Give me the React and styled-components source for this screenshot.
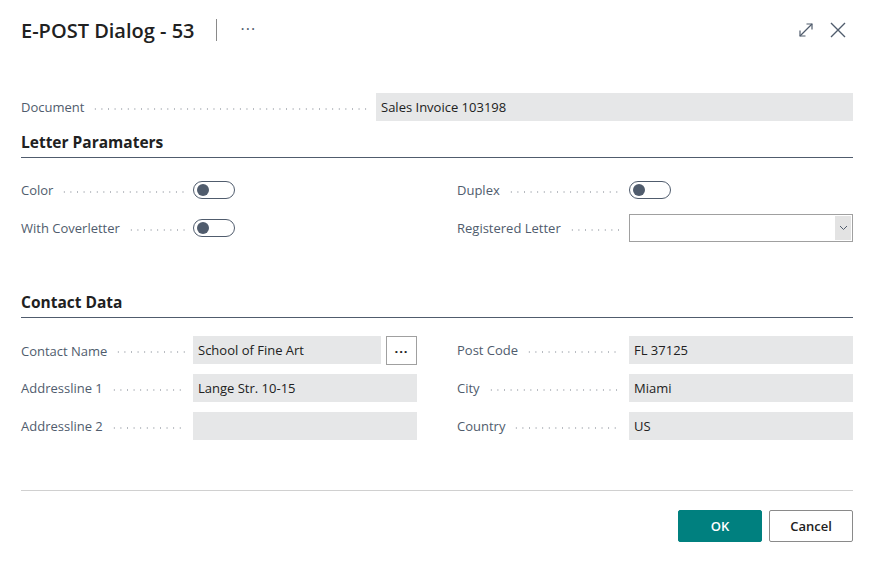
import React from 'react';
import styled, { createGlobalStyle } from 'styled-components';

const GlobalStyle = createGlobalStyle`
  html, body {
    margin: 0;
    padding: 0;
    background: #ffffff;
  }
  body {
    font-family: "Open Sans", "Noto Sans", sans-serif;
    color: #212121;
  }
`;

const Dialog = styled.div`
  width: 872px;
  height: 563px;
  box-sizing: border-box;
  padding: 0 19px 0 21px;
  display: flex;
  flex-direction: column;
`;

const Header = styled.header`
  height: 60px;
  display: flex;
  align-items: center;
`;

const Title = styled.h1`
  margin: 0;
  font-size: 20px;
  font-weight: 600;
  color: #212121;
`;

const Divider = styled.div`
  width: 1px;
  height: 22px;
  background: #8a8a8a;
  margin: 0 24px 0 21px;
`;

const MoreDots = styled.span`
  font-size: 16px;
  color: #505c6d;
  letter-spacing: 1px;
  margin-top: -2px;
`;

const HeaderIcons = styled.div`
  margin-left: auto;
  display: flex;
  align-items: center;
  gap: 14px;
  margin-right: 6px;
`;

const Body = styled.div`
  padding-top: 33px;
`;

const Row = styled.div`
  display: grid;
  grid-template-columns: ${(p) => p.$label}px 1fr;
  column-gap: 8px;
  align-items: center;
  height: 28px;
  margin-bottom: ${(p) => p.$gap || 10}px;
`;

const Label = styled.div`
  display: flex;
  align-items: center;
  font-size: 13px;
  color: #505c6d;
  white-space: nowrap;

  &::after {
    content: '';
    flex: 1;
    height: 2px;
    margin: 3px 0 0 8px;
    background-image: radial-gradient(circle, #b5b9bf 0.8px, transparent 1px);
    background-size: 6.6px 2px;
    background-repeat: repeat-x;
  }
`;

const Field = styled.div`
  height: 28px;
  background: #e6e7e8;
  font-size: 13px;
  color: #212121;
  display: flex;
  align-items: center;
  padding: 0 5px;
  box-sizing: border-box;
`;

const SectionTitle = styled.h2`
  margin: 0;
  font-size: 15.5px;
  font-weight: 700;
  color: #212121;
  padding-bottom: 4px;
  border-bottom: 1px solid #505c6d;
`;

const Columns = styled.div`
  display: grid;
  grid-template-columns: 396px 396px;
  column-gap: 40px;
  margin-top: ${(p) => p.$top}px;
`;

const Spacer = styled.div`
  height: 39px;
`;

const Toggle = styled.div`
  width: 42px;
  height: 18px;
  box-sizing: border-box;
  border: 1px solid #505c6d;
  border-radius: 9px;
  display: flex;
  align-items: center;
  padding-left: 3px;

  &::before {
    content: '';
    width: 12px;
    height: 12px;
    border-radius: 50%;
    background: #505c6d;
  }
`;

const Select = styled.div`
  height: 28px;
  box-sizing: border-box;
  border: 1px solid #a0a0a0;
  display: flex;
  justify-content: flex-end;
  padding: 1px;
`;

const SelectButton = styled.div`
  width: 16px;
  background: #e3e3e3;
  display: flex;
  align-items: center;
  justify-content: center;
`;

const FieldWithButton = styled.div`
  display: flex;
  gap: 5px;
`;

const LookupButton = styled.div`
  width: 31px;
  height: 29px;
  box-sizing: border-box;
  border: 1px solid #a0a0a0;
  display: flex;
  align-items: center;
  justify-content: center;
  font-size: 13px;
  font-weight: 700;
  color: #212121;
  letter-spacing: 1px;
`;

const Footer = styled.footer`
  margin-top: 40px;
  border-top: 1px solid #d0d0d0;
  padding-top: 19px;
  display: flex;
  justify-content: flex-end;
  gap: 7px;
`;

const Button = styled.button`
  width: 84px;
  height: 32px;
  box-sizing: border-box;
  border-radius: 2px;
  font-family: "Open Sans", "Noto Sans", sans-serif;
  font-size: 13px;
  font-weight: 600;
  border: 1px solid ${(p) => (p.$primary ? '#00807f' : '#8a8a8a')};
  background: ${(p) => (p.$primary ? '#00807f' : '#ffffff')};
  color: ${(p) => (p.$primary ? '#ffffff' : '#212121')};
`;

const ExpandIcon = () => (
  <svg width="18" height="18" viewBox="0 0 18 18" fill="none" stroke="#505c6d" strokeWidth="1.2">
    <path d="M3 15 L15 3" />
    <path d="M9.5 3 H15 V8.5" />
    <path d="M3 9.5 V15 H8.5" />
  </svg>
);

const CloseIcon = () => (
  <svg width="18" height="18" viewBox="0 0 18 18" fill="none" stroke="#505c6d" strokeWidth="1.4">
    <path d="M2 2 L16 16 M16 2 L2 16" />
  </svg>
);

const Chevron = () => (
  <svg width="9" height="6" viewBox="0 0 9 6" fill="none" stroke="#505c6d" strokeWidth="1">
    <path d="M1 1 L4.5 4.5 L8 1" />
  </svg>
);

const Pair = ({ label, children }) => (
  <Row $label={164}>
    <Label>{label}</Label>
    {children}
  </Row>
);

export default function App() {
  return (
    <>
      <GlobalStyle />
      <Dialog>
        <Header>
          <Title>E-POST Dialog - 53</Title>
          <Divider />
          <MoreDots>···</MoreDots>
          <HeaderIcons>
            <ExpandIcon />
            <CloseIcon />
          </HeaderIcons>
        </Header>
        <Body>
          <Row $label={347} $gap={10}>
            <Label>Document</Label>
            <Field>Sales Invoice 103198</Field>
          </Row>

          <SectionTitle>Letter Paramaters</SectionTitle>
          <Columns $top={18}>
            <div>
              <Pair label="Color"><Toggle /></Pair>
              <Pair label="With Coverletter"><Toggle /></Pair>
            </div>
            <div>
              <Pair label="Duplex"><Toggle /></Pair>
              <Pair label="Registered Letter">
                <Select>
                  <SelectButton><Chevron /></SelectButton>
                </Select>
              </Pair>
            </div>
          </Columns>

          <Spacer />
          <SectionTitle>Contact Data</SectionTitle>
          <Columns $top={18}>
            <div>
              <Pair label="Contact Name">
                <FieldWithButton>
                  <Field style={{ flex: 1 }}>School of Fine Art</Field>
                  <LookupButton>···</LookupButton>
                </FieldWithButton>
              </Pair>
              <Pair label="Addressline 1"><Field>Lange Str. 10-15</Field></Pair>
              <Pair label="Addressline 2"><Field /></Pair>
            </div>
            <div>
              <Pair label="Post Code"><Field>FL 37125</Field></Pair>
              <Pair label="City"><Field>Miami</Field></Pair>
              <Pair label="Country"><Field>US</Field></Pair>
            </div>
          </Columns>
        </Body>
        <Footer>
          <Button $primary>OK</Button>
          <Button>Cancel</Button>
        </Footer>
      </Dialog>
    </>
  );
}
